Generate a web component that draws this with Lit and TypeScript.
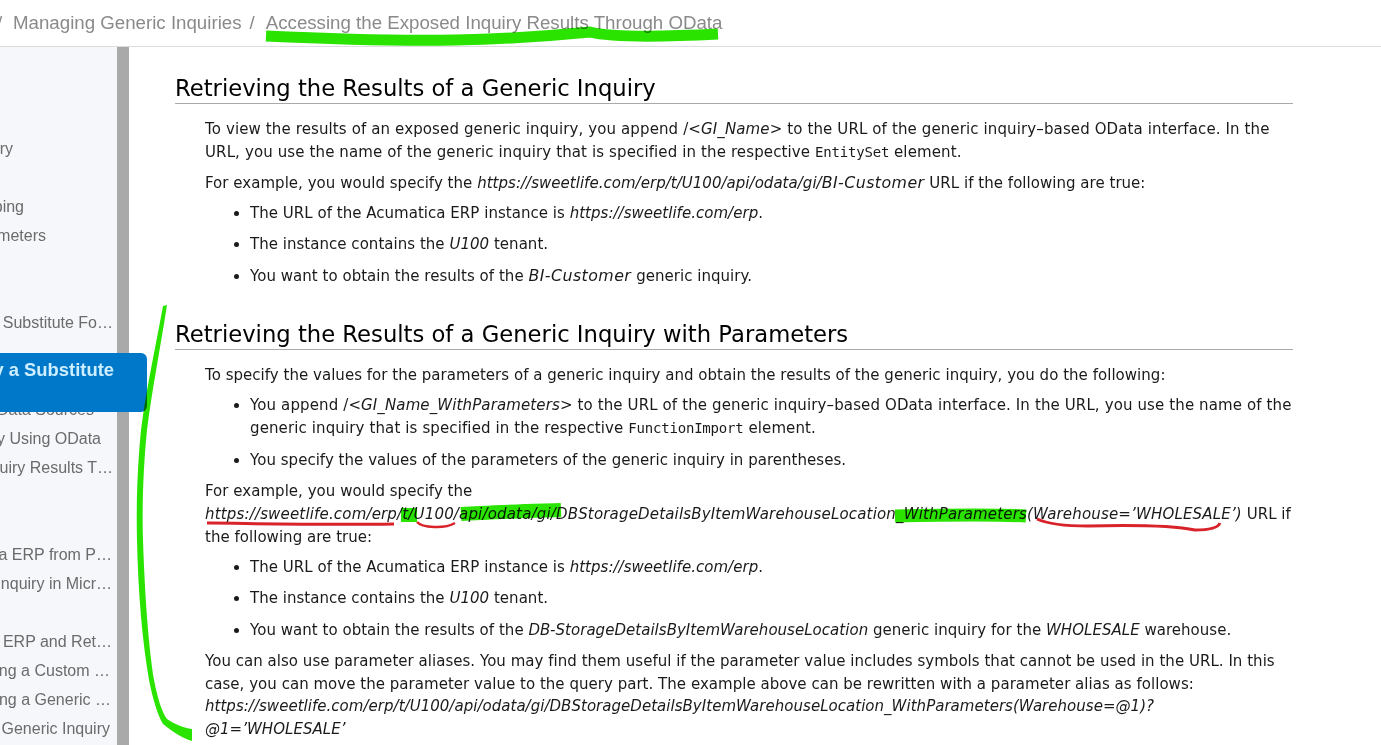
import { LitElement, html, css, svg } from "lit";
import { customElement } from "lit/decorators.js";

const rows: [string, number][] = [
  ["Generic Inquiry", 13], ["", 0], ["Mapping", 24], ["Using Parameters", 46], ["", 0], ["", 0],
  ["Specifying a Substitute Fo…", 113], ["", 0], ["", 0], ["Using Data Sources", 94], ["Exposing an Inquiry Using OData", 101],
  ["Accessing the Exposed Inquiry Results T…", 113], ["", 0], ["", 0], ["Acumatica ERP from P…", 112],
  ["Generic Inquiry in Micr…", 112], ["", 0], ["Acumatica ERP and Ret…", 112], ["Using a Custom …", 110], ["Using a Generic …", 111], ["a Generic Inquiry", 110],
];

@customElement("app-root")
export class AppRoot extends LitElement {
  static styles = css`
    :host { display: block; position: relative; width: 1381px; height: 745px; overflow: hidden; background: #fff; }
    .top { height: 46px; border-bottom: 1px solid #ddd; display: flex; align-items: center; gap: 8px; font: 18.7px/24px "Liberation Sans", Arial, sans-serif; color: #8a8a8a; white-space: nowrap; }
    .sep0 { margin-left: -3px; width: 8px; }
    .cur { margin-left: 3px; }
    .body { display: flex; height: 698px; }
    .side { width: 117px; flex: none; background: #f5f7fa; overflow: hidden; padding-top: 87px; box-sizing: border-box; }
    .row { height: 29px; display: flex; justify-content: flex-end; white-space: nowrap; overflow: hidden; font: 16px/29px "Liberation Sans", Arial, sans-serif; color: #6b6b6b; }
    .bar { width: 12px; flex: none; background: #a9a9a9; }
    .main { flex: 1; padding: 26px 88px 0 46px; min-width: 0; font: 15px/22.7px "DejaVu Sans", sans-serif; letter-spacing: 0.03px; color: #1a1a1a; }
    h2 { font: 400 22.7px/30px "DejaVu Sans", sans-serif; letter-spacing: 0; color: #000; margin: 0; border-bottom: 1px solid #aaa; height: 30px; }
    .sec2 { margin-top: 32px; }
    .inner { padding: 14px 0 0 30px; }
    p { margin: 0 0 8.3px; }
    ul { margin: -1px 0 8px; padding: 0 0 0 45px; }
    li { margin-bottom: 8.8px; }
    code { font: 14px "DejaVu Sans Mono", monospace; letter-spacing: -0.2px; }
    .wd { letter-spacing: 0.12px; }
    .url { letter-spacing: 0.17px; }
    .cust { font-size: 15.8px; letter-spacing: 0.45px; }
    .active { position: absolute; left: 0; top: 353px; width: 147px; height: 59px; box-sizing: border-box; background: #0078c9; border-radius: 0 6px 6px 0; color: #cdeeff; font: 700 18.4px/34px "Liberation Sans", Arial, sans-serif; display: flex; justify-content: flex-end; padding-right: 33px; overflow: hidden; white-space: nowrap; }
    .ink { position: absolute; inset: 0; width: 1381px; height: 745px; pointer-events: none; mix-blend-mode: multiply; }
  `;

  render() {
    return html`
      <div class="top"><span class="sep0">/</span><span>Managing Generic Inquiries</span><span>/</span><span class="cur">Accessing the Exposed Inquiry Results Through OData</span></div>
      <div class="body">
        <div class="side">${rows.map(([t, x]) => html`<div class="row" style="padding-right:${x ? 117 - x : 0}px">${t}</div>`)}</div>
        <div class="bar"></div>
        <div class="main">
          <div class="sec">
            <h2>Retrieving the Results of a Generic Inquiry</h2>
            <div class="inner">
              <p class="wd">To view the results of an exposed generic inquiry, you append /<i>&lt;GI_Name&gt;</i> to the URL of the generic inquiry–based OData interface. In the URL, you use the name of the generic inquiry that is specified in the respective <code>EntitySet</code> element.</p>
              <p>For example, you would specify the <i>https://sweetlife.com/erp/t/U100/api/odata/gi/<span class="cust">BI-Customer</span></i> URL if the following are true:</p>
              <ul>
                <li>The URL of the Acumatica ERP instance is <i>https://sweetlife.com/erp</i>.</li>
                <li>The instance contains the <i>U100</i> tenant.</li>
                <li>You want to obtain the results of the <i class="cust">BI-Customer</i> generic inquiry.</li>
              </ul>
            </div>
          </div>
          <div class="sec sec2">
            <h2>Retrieving the Results of a Generic Inquiry with Parameters</h2>
            <div class="inner">
              <p>To specify the values for the parameters of a generic inquiry and obtain the results of the generic inquiry, you do the following:</p>
              <ul>
                <li class="wd">You append /<i>&lt;GI_Name_WithParameters&gt;</i> to the URL of the generic inquiry–based OData interface. In the URL, you use the name of the generic inquiry that is specified in the respective <code>FunctionImport</code> element.</li>
                <li>You specify the values of the parameters of the generic inquiry in parentheses.</li>
              </ul>
              <p>For example, you would specify the <i class="url">https://sweetlife.com/erp/t/U100/api/odata/gi/DBStorageDetailsByItemWarehouseLocation_WithParameters(Warehouse=’WHOLESALE’)</i> URL if the following are true:</p>
              <ul>
                <li>The URL of the Acumatica ERP instance is <i>https://sweetlife.com/erp</i>.</li>
                <li>The instance contains the <i>U100</i> tenant.</li>
                <li>You want to obtain the results of the <i>DB-StorageDetailsByItemWarehouseLocation</i> generic inquiry for the <i>WHOLESALE</i> warehouse.</li>
              </ul>
              <p>You can also use parameter aliases. You may find them useful if the parameter value includes symbols that cannot be used in the URL. In this case, you can move the parameter value to the query part. The example above can be rewritten with a parameter alias as follows: <i>https://sweetlife.com/erp/t/U100/api/odata/gi/DBStorageDetailsByItemWarehouseLocation_WithParameters(Warehouse=@1)?<br />@1=’WHOLESALE’</i></p>
            </div>
          </div>
        </div>
      </div>
      <div class="active">y a Substitute</div>
      <svg class="ink" viewBox="0 0 1381 745" fill="none">
        ${svg`
        <path d="M266 36 C330 39 400 41 455 40 C510 39 560 35 590 32 C610 37 660 37 718 34" stroke="#2ae400" stroke-width="11"/>
        <path fill="#2ae400" d="M163 306 L167 305 C160 350 152 390 147 430 C143 470 142 510 143 540 C145 600 149 650 154 680 C158 700 162 712 167 719 C174 724 184 728 192 729 L192 741 C182 738 170 730 163 724 C158 716 153 700 149 680 C142 640 138 590 137 540 C136 500 138 460 141 430 C146 390 155 350 163 306 Z"/>
        <path d="M401 515 L417 515" stroke="#2ae400" stroke-width="14"/>
        <path d="M461 514 C490 512 530 511 561 510" stroke="#2ae400" stroke-width="14"/>
        <path d="M895 516 C940 515 990 514 1026 516" stroke="#2ae400" stroke-width="13"/>
        <path d="M207 523 C270 524 330 525 394 524" stroke="#d9232a" stroke-width="3"/>
        <path d="M417 522 C422 528 445 529 455 523" stroke="#d9232a" stroke-width="2.5"/>
        <path d="M1037 519 C1050 525 1070 526 1088 526 C1130 525 1170 525 1195 530 C1208 530 1218 528 1220 523" stroke="#d9232a" stroke-width="3"/>
        `}
      </svg>
    `;
  }
}
